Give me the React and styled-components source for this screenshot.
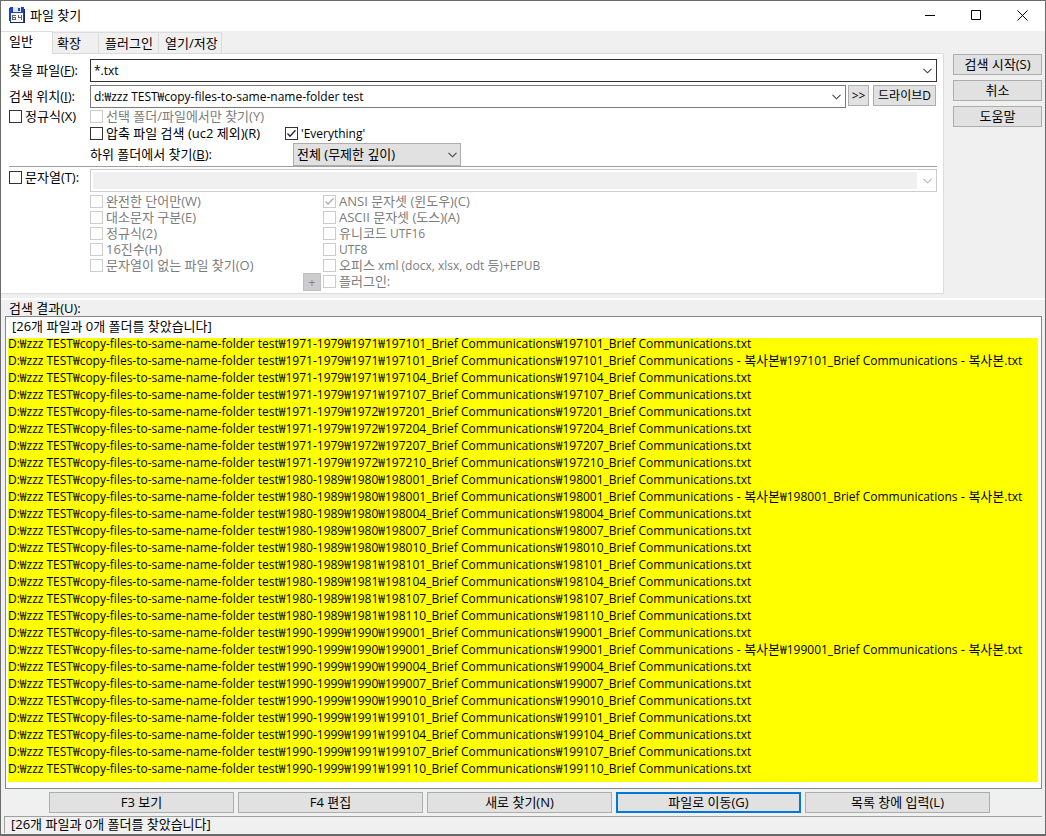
import React from "react";
import styled, { createGlobalStyle } from "styled-components";

const GlobalStyle = createGlobalStyle`
  *, *::before, *::after { box-sizing: border-box; }
  body { margin: 0; background: #f0f0f0; }
  body, button, input, select {
    font-family: "Open Sans", "Noto Sans CJK KR", sans-serif;
    font-size: 13px;
    line-height: 17px;
    color: #000;
  }
`;

const Window = styled.div`
  display: flex;
  flex-direction: column;
  min-height: 100vh;
  background: #f0f0f0;
  border: 1px solid #6b6b6b;
  border-bottom-width: 2px;
`;

const TitleBar = styled.header`
  display: flex;
  align-items: center;
  height: 30px;
  padding: 0 0 2px 8px;
  background: #fff;
`;

const Title = styled.h1`
  flex: 1;
  margin: 0 0 0 5px;
  font-size: 13px;
  font-weight: 400;
`;

const CaptionButton = styled.button`
  display: grid;
  place-items: center;
  width: 46px;
  height: 28px;
  padding: 0;
  border: 0;
  background: transparent;
`;

const Main = styled.div`
  display: flex;
  align-items: flex-start;
  border-bottom: 2px solid #fff;
  padding-bottom: 4px;
`;

const TabArea = styled.div`
  flex: 1;
  min-width: 0;
`;

const Tabs = styled.div`
  display: flex;
  align-items: flex-end;
  height: 22px;
`;

const Tab = styled.button`
  width: ${(p) => p.$width}px;
  height: ${(p) => (p.$active ? 23 : 21)}px;
  margin-bottom: ${(p) => (p.$active ? -1 : 0)}px;
  padding: 0 0 ${(p) => (p.$active ? 4 : 0)}px ${(p) => p.$indent}px;
  border: 0 solid #dcdcdc;
  border-top-width: 1px;
  border-right-width: 1px;
  background: ${(p) => (p.$active ? "#fff" : "#f0f0f0")};
  text-align: left;
  white-space: nowrap;
`;

const Panel = styled.form`
  display: grid;
  grid-template-columns: 81px minmax(0, 1fr);
  padding: 5px 6px 2px 8px;
  background: #fff;
  border: 1px solid #dcdcdc;
  border-left: 0;
`;

const Label = styled.label`
  line-height: 22px;
  white-space: nowrap;
`;

const Line = styled.div`
  display: flex;
  align-items: flex-start;
  margin-bottom: ${(p) => p.$after || 0}px;
`;

const PlaceLine = styled(Line)`
  padding-right: 1px;
`;

const PlaceButtons = styled.div`
  display: flex;
  gap: 4px;
  padding-left: 2px;
`;

const ComboBox = styled.div`
  display: flex;
  flex: 1;
  min-width: 0;
  height: 23px;
  border: 1px solid ${(p) => (p.$disabled ? "#cccccc" : p.$strong ? "#333" : "#7a7a7a")};
  background: #fff;
`;

const ComboInput = styled.input`
  flex: 1;
  min-width: 0;
  margin: ${(p) => (p.disabled ? 2 : 0)}px;
  padding: 0 3px;
  border: 0;
  outline: 0;
  background: ${(p) => (p.disabled ? "#f0f0f0" : "#fff")};
  font-size: 12px;
`;

const ComboArrow = styled.button`
  display: grid;
  place-items: center;
  width: 17px;
  padding: 0;
  border: 0;
  background: transparent;
`;

const PushButton = styled.button`
  width: ${(p) => (p.$width ? p.$width + "px" : "auto")};
  height: 21px;
  padding: 0;
  border: ${(p) => (p.$default ? "2px solid #0078d7" : "1px solid #adadad")};
  background: #e1e1e1;
  white-space: nowrap;
  line-height: 15px;
`;

const SmallButton = styled(PushButton)`
  font-size: 12px;
`;

const PlusButton = styled(PushButton)`
  width: 18px;
  height: 18px;
  margin-right: 2px;
  border-color: #bfbfbf;
  background: #ccc;
  color: #838383;
  font-size: 12px;
`;

const Check = styled.label`
  display: flex;
  align-items: center;
  gap: 3px;
  height: ${(p) => p.$height || 17}px;
  color: ${(p) => (p.$disabled ? "#7c7c7c" : "#000")};
  font-size: ${(p) => (p.$latin ? 12 : 13)}px;
  white-space: nowrap;
`;

const Box = styled.span`
  position: relative;
  display: block;
  width: 13px;
  height: 13px;
  svg {
    position: absolute;
    inset: 0;
    pointer-events: none;
  }
`;

const BoxInput = styled.input`
  appearance: none;
  display: block;
  width: 13px;
  height: 13px;
  margin: 0;
  border: 1px solid #333;
  background: #fff;
  &:disabled { border-color: #ccc; }
  & + svg { display: none; }
  &:checked + svg { display: block; }
`;

const Rule = styled.hr`
  grid-column: 1 / -1;
  width: 100%;
  height: 1px;
  margin: 0 0 2px;
  border: 0;
  background: #a0a0a0;
`;

const SelectFrame = styled.span`
  position: relative;
  width: 168px;
  height: 23px;
  svg {
    position: absolute;
    right: 4px;
    top: 9px;
    pointer-events: none;
  }
`;

const Select = styled.select`
  appearance: none;
  width: 100%;
  height: 100%;
  padding: 0 20px 0 3px;
  border: 1px solid #adadad;
  border-radius: 0;
  background: #e1e1e1;
`;

const FixedCell = styled.div`
  width: ${(p) => p.$width}px;
  flex: none;
`;

const Stack = styled.div`
  display: flex;
  flex-direction: column;
`;

const PluginLine = styled(Line)`
  height: 18px;
  margin-left: -20px;
`;

const SideButtons = styled.div`
  display: flex;
  flex-direction: column;
  gap: 5px;
  width: 101px;
  padding: 23px 3px 0 9px;
`;

const Results = styled.section`
  display: flex;
  flex: 1;
  flex-direction: column;
  padding: 0 3px 0 4px;
`;

const ResultsTitle = styled.h2`
  height: 16px;
  margin: 0;
  padding-left: 4px;
  font-size: 13px;
  font-weight: 400;
`;

const ListBox = styled.div`
  flex: 1;
  padding: 1px 3px 0 2px;
  border: 1px solid #828790;
  background: #fff;
`;

const Summary = styled.div`
  height: 17px;
  padding-left: 4px;
  white-space: nowrap;
`;

const PathList = styled.ul`
  margin: 0;
  padding: 0 0 5px;
  list-style: none;
  font-size: 12px;
  background: linear-gradient(#fff 3px, #ff0 3px);
`;

const PathRow = styled.li`
  height: 17px;
  overflow: hidden;
  white-space: nowrap;
`;

const Hangul = styled.span`
  font-size: 13px;
`;

const Actions = styled.div`
  display: grid;
  grid-template-columns: repeat(5, 1fr);
  gap: 4px;
  padding: 3px 55px 3px 48px;
`;

const StatusBar = styled.footer`
  height: 17px;
  margin: 0 3px 1px;
  padding-left: 6px;
  border: solid #a0a0a0;
  border-width: 1px 0 0 1px;
  line-height: 15px;
`;

const Chevron = ({ color = "#444" }) => (
  <svg width="9" height="6" viewBox="0 0 9 6" fill="none" stroke={color} strokeWidth="1.1">
    <path d="M.5 .8 4.5 4.8 8.5 .8" />
  </svg>
);

const DiskIcon = () => (
  <svg width="16" height="16" viewBox="0 0 16 16" shapeRendering="crispEdges">
    <path d="M1 0h13l1 1v14H1l-1-1V1z" fill="#1c44c4" />
    <path d="M15 2v13H1v1h15V2z" fill="#14246e" />
    <path d="M4 0h8v5H4z" fill="#e4e8f0" />
    <path d="M9 1h2v3H9z" fill="#1c44c4" />
    <path d="M2 6h12v9H2z" fill="#fafaf5" />
    <path d="M4 8h3v1H4zM3 8h1v5H3zM4 10h3v1H4zM6 10h1v3H6zM4 12h2v1H4z" fill="#666" />
    <path d="M9 8h1v3H9zM10 10h2v1h-2zM12 8h1v5h-1z" fill="#666" />
  </svg>
);

function Checkbox({ children, checked, disabled, height, latin }) {
  return (
    <Check $disabled={disabled} $height={height} $latin={latin}>
      <Box>
        <BoxInput type="checkbox" defaultChecked={checked} disabled={disabled} />
        <svg width="13" height="13" viewBox="0 0 13 13" fill="none" stroke={disabled ? "#b0b0b0" : "#222"} strokeWidth="1.3">
          <path d="M2.500 6.500 5 9.200 10.500 3.200" />
        </svg>
      </Box>
      <span>{children}</span>
    </Check>
  );
}

function Combo({ id, label, value, disabled, strong }) {
  return (
    <ComboBox $disabled={disabled} $strong={strong}>
      <ComboInput id={id} aria-label={label} defaultValue={value} disabled={disabled} />
      <ComboArrow type="button" aria-label="목록 열기" disabled={disabled}>
        <Chevron color={disabled ? "#b5b5b5" : "#444"} />
      </ComboArrow>
    </ComboBox>
  );
}

const tabs = [
  { name: "일반", width: 52, indent: 8, active: true },
  { name: "확장", width: 46, indent: 4 },
  { name: "플러그인", width: 60, indent: 6 },
  { name: "열기/저장", width: 63, indent: 6 },
];

const files = [
  ["1971-1979", 1971, 197101], ["1971-1979", 1971, 197101, true],
  ["1971-1979", 1971, 197104], ["1971-1979", 1971, 197107],
  ["1971-1979", 1972, 197201], ["1971-1979", 1972, 197204],
  ["1971-1979", 1972, 197207], ["1971-1979", 1972, 197210],
  ["1980-1989", 1980, 198001], ["1980-1989", 1980, 198001, true],
  ["1980-1989", 1980, 198004], ["1980-1989", 1980, 198007],
  ["1980-1989", 1980, 198010], ["1980-1989", 1981, 198101],
  ["1980-1989", 1981, 198104], ["1980-1989", 1981, 198107],
  ["1980-1989", 1981, 198110], ["1990-1999", 1990, 199001],
  ["1990-1999", 1990, 199001, true], ["1990-1999", 1990, 199004],
  ["1990-1999", 1990, 199007], ["1990-1999", 1990, 199010],
  ["1990-1999", 1991, 199101], ["1990-1999", 1991, 199104],
  ["1990-1999", 1991, 199107], ["1990-1999", 1991, 199110],
];

function FilePath({ file: [decade, year, issue, copy] }) {
  const name = `${issue}_Brief Communications`;
  const suffix = <Hangul> - 복사본</Hangul>;
  return (
    <PathRow>
      {`D:₩zzz TEST₩copy-files-to-same-name-folder test₩${decade}₩${year}₩${name}₩${name}`}
      {copy && <>{suffix}₩{name}{suffix}</>}
      .txt
    </PathRow>
  );
}

const summary = "[26개 파일과 0개 폴더를 찾았습니다]";

export default function App() {
  return (
    <>
      <GlobalStyle />
      <Window>
        <TitleBar>
          <DiskIcon />
          <Title>파일 찾기</Title>
          <CaptionButton aria-label="최소화">
            <svg width="11" height="11" stroke="#000"><path d="M0 5.500h10" /></svg>
          </CaptionButton>
          <CaptionButton aria-label="최대화">
            <svg width="11" height="11" fill="none" stroke="#000"><path d="M.5 .5h9v9h-9z" /></svg>
          </CaptionButton>
          <CaptionButton aria-label="닫기">
            <svg width="11" height="11" stroke="#000"><path d="M.5 .5l10 10M10.500 .5l-10 10" /></svg>
          </CaptionButton>
        </TitleBar>

        <Main>
          <TabArea>
            <Tabs role="tablist">
              {tabs.map((t) => (
                <Tab key={t.name} role="tab" aria-selected={!!t.active} $active={t.active} $width={t.width} $indent={t.indent}>
                  {t.name}
                </Tab>
              ))}
            </Tabs>
            <Panel onSubmit={(e) => e.preventDefault()}>
              <Label htmlFor="files">찾을 파일(<u>F</u>):</Label>
              <Line $after={3}>
                <Combo id="files" value="*.txt" strong />
              </Line>

              <Label htmlFor="place">검색 위치(<u>I</u>):</Label>
              <PlaceLine>
                <Combo id="place" value="d:₩zzz TEST₩copy-files-to-same-name-folder test" />
                <PlaceButtons>
                  <SmallButton type="button" $width={21}>&gt;&gt;</SmallButton>
                  <SmallButton type="button" $width={63}>드라이브D</SmallButton>
                </PlaceButtons>
              </PlaceLine>

              <Checkbox>정규식(X)</Checkbox>
              <Checkbox disabled>선택 폴더/파일에서만 찾기(Y)</Checkbox>

              <span />
              <Line $after={1}>
                <FixedCell $width={195}>
                  <Checkbox>압축 파일 검색 (uc2 제외)(R)</Checkbox>
                </FixedCell>
                <Checkbox checked latin>'Everything'</Checkbox>
              </Line>

              <span />
              <Line>
                <FixedCell $width={203}>
                  <Label htmlFor="depth">하위 폴더에서 찾기(<u>B</u>):</Label>
                </FixedCell>
                <SelectFrame>
                  <Select id="depth">
                    <option>전체 (무제한 깊이)</option>
                  </Select>
                  <Chevron />
                </SelectFrame>
              </Line>

              <Rule />

              <Checkbox>문자열(T):</Checkbox>
              <Line $after={1}>
                <Combo label="문자열" disabled />
              </Line>

              <span />
              <Line>
                <FixedCell $width={233}>
                  <Checkbox disabled height={16}>완전한 단어만(W)</Checkbox>
                  <Checkbox disabled height={16}>대소문자 구분(E)</Checkbox>
                  <Checkbox disabled height={16}>정규식(2)</Checkbox>
                  <Checkbox disabled height={16}>16진수(H)</Checkbox>
                  <Checkbox disabled height={16}>문자열이 없는 파일 찾기(O)</Checkbox>
                </FixedCell>
                <Stack>
                  <Checkbox disabled checked height={16}>ANSI 문자셋 (윈도우)(C)</Checkbox>
                  <Checkbox disabled height={16}>ASCII 문자셋 (도스)(A)</Checkbox>
                  <Checkbox disabled height={16} latin><Hangul>유니코드</Hangul> UTF16</Checkbox>
                  <Checkbox disabled height={16} latin>UTF8</Checkbox>
                  <Checkbox disabled height={16} latin>
                    <Hangul>오피스</Hangul> xml (docx, xlsx, odt <Hangul>등</Hangul>)+EPUB
                  </Checkbox>
                  <PluginLine>
                    <PlusButton type="button" disabled>+</PlusButton>
                    <Checkbox disabled height={16}>플러그인:</Checkbox>
                  </PluginLine>
                </Stack>
              </Line>
            </Panel>
          </TabArea>
          <SideButtons>
            <PushButton>검색 시작(S)</PushButton>
            <PushButton>취소</PushButton>
            <PushButton>도움말</PushButton>
          </SideButtons>
        </Main>

        <Results>
          <ResultsTitle>검색 결과(U):</ResultsTitle>
          <ListBox>
            <Summary>{summary}</Summary>
            <PathList>
              {files.map((f, i) => (
                <FilePath key={i} file={f} />
              ))}
            </PathList>
          </ListBox>
        </Results>

        <Actions>
          <PushButton>F3 보기</PushButton>
          <PushButton>F4 편집</PushButton>
          <PushButton>새로 찾기(N)</PushButton>
          <PushButton $default>파일로 이동(G)</PushButton>
          <PushButton>목록 창에 입력(L)</PushButton>
        </Actions>
        <StatusBar>{summary}</StatusBar>
      </Window>
    </>
  );
}
